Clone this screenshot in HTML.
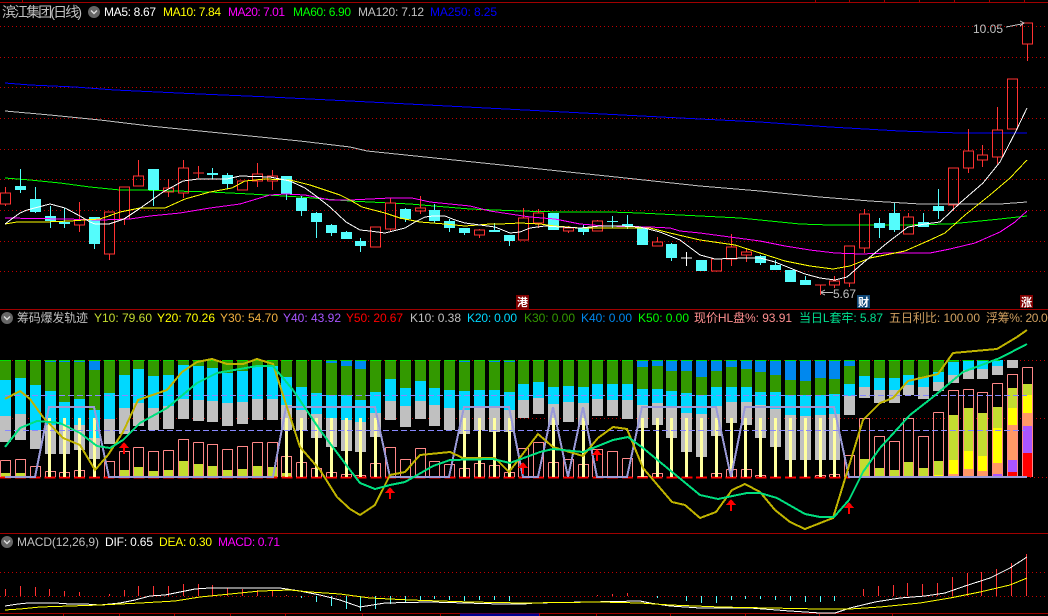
<!DOCTYPE html>
<html><head><meta charset="utf-8"><style>
html,body{margin:0;padding:0;background:#000;width:1048px;height:616px;overflow:hidden}
svg{display:block}
text{font-family:"Liberation Sans","Noto Sans CJK SC",sans-serif;font-size:12px}
.c{font-size:11px;fill:#fff;font-weight:bold;text-anchor:middle}
</style></head><body>
<svg width="1048" height="616" viewBox="0 0 1048 616">
<rect width="1048" height="616" fill="#000"/>
<g shape-rendering="crispEdges" fill="none">
<!-- frame -->
<path d="M0 2.5H1048M0 309.5H1048M0 533.5H1048M0 613.5H1048M22.5 0V2M815.5 0V2M849.5 0V2M884.5 0V2M919.5 0V2M954.5 0V2M989.5 0V2M1024.5 0V2M63.5 613V616M119.5 613V616M174.5 613V616M230.5 613V616M285.5 613V616M362.5 613V616M440.5 613V616M539.5 613V616M596.5 613V616M670.5 613V616M745.5 613V616M819.5 613V616M892.5 613V616" stroke="#a00000"/>
<path d="M460 615H539" stroke="#000090" stroke-width="3"/>
<!-- grid -->
<path d="M0 26.5H1048M0 57.5H1048M0 87.5H1048M0 118.5H1048M0 149.5H1048M0 179.5H1048M0 210.5H1048M0 241.5H1048M0 271.5H1048M0 360.5H1048M0 418.5H1048M0 572.5H1048M0 596.5H1048" stroke="#c00000" stroke-dasharray="1 3"/>

<!-- MA lines -->
<polyline stroke="#0000ff" points="5,83 30,85 75,87 115,90 200,94 270,97 350,101 700,119 760,122 830,127 900,131 960,133 1027,133"/>
<polyline stroke="#c0c0c0" points="5,111 50,115 100,120 150,126 200,131 250,136 300,141 350,147 367,151 483,163 616,177 700,186 760,191 820,197 870,201 920,204 1000,204 1027,202"/>
<polyline stroke="#00ff00" points="5,178 30,180 60,183 90,187 120,190 140,190 210,192 250,194 300,197 350,201 370,202 410,204 470,209 520,211 560,212 610,212 640,213 700,216 740,218 760,220 800,224 830,225 900,225 950,224 1000,219 1027,216"/>

<!-- candles: wicks/bodies -->
<path stroke="#54fcfc" d="M20.5 169V193M35.5 187V213M50.5 206V228M64.5 208V228M94.5 217V249M153.5 169V206M212.5 168V179M227.5 173V189M286.5 176V200M301.5 196V216M316.5 212V238M331.5 224V236M346.5 231V239M360.5 238V252M405.5 208V222M434.5 204V223M449.5 219V232M464.5 228V235M494.5 223V232M509.5 235V246M583.5 224V235M612.5 216V228M627.5 215V229M671.5 243V261M760.5 255V265M775.5 260V270M805.5 276V285M879.5 218V238M894.5 203V232M923.5 213V227M938.5 189V219"/>
<path fill="#54fcfc" d="M15 186h11v4h-11zM30 199h11v13h-11zM45 216h11v5h-11zM59 222h11v2h-11zM89 217h11v27h-11zM148 169h11v21h-11zM207 173h11v2h-11zM222 175h11v9h-11zM281 176h11v18h-11zM296 198h11v13h-11zM311 213h11v9h-11zM326 225h11v8h-11zM341 232h11v7h-11zM355 241h11v5h-11zM400 209h11v10h-11zM429 210h11v11h-11zM444 221h11v7h-11zM459 228h11v5h-11zM489 230h11v2h-11zM504 235h11v6h-11zM548 213h11v17h-11zM578 228h11v4h-11zM607 221h11v1h-11zM622 224h11v2h-11zM637 227h11v18h-11zM666 244h11v14h-11zM696 260h11v11h-11zM755 256h11v7h-11zM770 265h11v5h-11zM785 270h11v12h-11zM800 280h11v5h-11zM874 223h11v5h-11zM889 213h11v17h-11zM918 222h11v5h-11zM933 206h11v5h-11z"/>
<path stroke="#ff3232" d="M5.5 187V193M.5 193h10V204H.5zM5.5 204V206M79.5 202V220M74.5 220h10V225h-10zM79.5 225V232M104.5 212h10V254h-10zM109.5 254V260M119.5 187h10V219h-10zM124.5 219V225M138.5 160V176M133.5 176h10V186h-10zM168.5 179V188M163.5 188h10V192h-10zM168.5 192V197M183.5 160V168M178.5 168h10V193h-10zM183.5 193V198M198.5 166V178M193 173H204M237.5 181h10V190h-10zM257.5 163V174M252.5 174h10V181h-10zM257.5 181V187M272.5 170V176M267.5 176h10V181h-10zM272.5 181V190M370.5 227h10V247h-10zM390.5 198V203M385.5 203h10V229h-10zM390.5 229V231M420.5 196V208M415.5 208h10V211h-10zM420.5 211V214M479.5 229V230M474.5 230h10V235h-10zM479.5 235V238M523.5 208V218M518.5 218h10V240h-10zM538.5 209V213M533.5 213h10V223h-10zM538.5 223V228M568.5 226V228M563.5 228h10V231h-10zM568.5 231V233M597.5 220V221M592.5 221h10V231h-10zM652.5 242h10V246h-10zM657.5 237V242M711.5 259h10V271h-10zM731.5 234V247M726.5 247h10V259h-10zM731.5 259V266M746.5 248V252M741.5 252h10V255h-10zM746.5 255V262M820.5 285V295M815 285H826M834.5 276V281M829.5 281h10V285h-10zM834.5 285V288M844.5 246h10V283h-10zM849.5 283V287M864.5 209V214M859.5 214h10V248h-10zM864.5 248V253M908.5 213V217M903.5 217h10V234h-10zM948.5 168h10V205h-10zM953.5 205V211M968.5 129V151M963.5 151h10V168h-10zM968.5 168V173M982.5 145V155M977.5 155h10V160h-10zM982.5 160V167M997.5 107V130M992.5 130h10V157h-10zM997.5 157V164M1007.5 79h10V129h-10zM1022.5 23h10V44h-10zM1027.5 44V61"/>
<path stroke="#fff" d="M686.5 252V266M681 258H692"/>

<polyline stroke="#ff00ff" points="5,218 65,219 100,220 130,219 150,216 180,213 210,208 240,204 270,195 285,194 305,195 330,200 350,200 390,198 412,198 430,202 450,204 470,206 490,211 510,214 530,217 555,219 580,224 605,226 650,227 670,228 680,231 700,233 730,237 760,241 785,246 810,250 835,253 860,254 890,253 930,253 950,249 975,243 1000,232 1015,222 1027,211"/>
<polyline stroke="#ffff00" points="5,224 17,222 45,222 70,221 100,219 120,212 140,208 165,208 185,199 210,192 232,188 245,181 265,179 290,180 310,185 340,195 350,200 362,207 385,213 400,218 420,222 445,224 465,226 490,224 500,224 520,223 540,224 555,226 580,228 610,228 650,228 670,233 700,240 735,245 760,253 785,261 810,266 833,269 850,266 870,258 890,254 905,251 930,240 945,233 965,215 990,195 1010,178 1027,160"/>
<polyline stroke="#ffffff" points="5,224 13,218 20,213 27,210 50,204 65,208 80,216 90,222 95,224 109,224 124,219 139,209 163,192 183,181 198,179 227,179 240,176 270,177 290,181 305,188 316,196 330,207 346,222 360,230 370,231 385,233 405,228 415,222 425,217 433,216 445,216 455,220 465,223 480,225 495,227 510,233 520,232 530,228 545,226 560,227 580,228 600,226 620,226 640,227 660,232 680,240 700,255 715,259 745,258 760,258 775,262 790,268 805,274 820,278 835,280 847,277 863,263 887,243 908,227 925,224 940,222 960,203 983,183 1000,162 1015,133 1027,108"/>

<!-- arrows in price chart -->
<path stroke="#c0c0c0" d="M821 292.5H833M821 292L825 290M821 293L825 295M1006 27L1024 23.5M1020 21L1024 23L1020 26"/>

<!-- stacks -->
<g stroke-width="11">
<path stroke="#c0c0c0" d="M5.5 360V442M20.5 360V440M35.5 360V449M50.5 360V454M64.5 360V454M79.5 360V450M94.5 360V459M109.5 360V444M124.5 360V434M138.5 360V426M153.5 360V430M168.5 360V429M183.5 360V419M198.5 360V421M212.5 360V422M227.5 360V426M242.5 360V424M257.5 360V420M272.5 360V420M286.5 360V430M301.5 360V430M316.5 360V438M331.5 360V447M346.5 360V451M360.5 360V452M375.5 360V437M390.5 360V420M405.5 360V427M420.5 360V419M434.5 360V426M449.5 360V430M464.5 360V434M479.5 360V430M494.5 360V432M509.5 360V432M523.5 360V418M538.5 360V414M553.5 360V425M568.5 360V422M583.5 360V425M597.5 360V416M612.5 360V416M627.5 360V419M642.5 360V428M657.5 360V425M671.5 360V438M686.5 360V452M701.5 360V457M716.5 360V436M731.5 360V423M746.5 360V425M760.5 360V438M775.5 360V447M790.5 360V460M805.5 360V460M820.5 360V460M834.5 360V460M849.5 360V415M864.5 360V398M879.5 360V403M894.5 360V403M908.5 360V395M923.5 360V399M938.5 360V391M953.5 360V383M968.5 360V379M982.5 360V379M997.5 360V375M1012.5 360V368"/>
<path stroke="#00d8ff" d="M5.5 360V416M20.5 360V414M35.5 360V430M50.5 360V425M64.5 360V425M79.5 360V425M94.5 360V438M109.5 360V419M124.5 360V408M138.5 360V403M153.5 360V408M168.5 360V406M183.5 360V399M198.5 360V400M212.5 360V401M227.5 360V403M242.5 360V402M257.5 360V399M272.5 360V399M286.5 360V405M301.5 360V410M316.5 360V414M331.5 360V418M346.5 360V420M360.5 360V422M375.5 360V413M390.5 360V401M405.5 360V406M420.5 360V401M434.5 360V405M449.5 360V408M464.5 360V410M479.5 360V408M494.5 360V408M509.5 360V410M523.5 360V400M538.5 360V398M553.5 360V404M568.5 360V402M583.5 360V403M597.5 360V399M612.5 360V400M627.5 360V400M642.5 360V405M657.5 360V403M671.5 360V407M686.5 360V413M701.5 360V414M716.5 360V406M731.5 360V402M746.5 360V402M760.5 360V405M775.5 360V409M790.5 360V415M805.5 360V416M820.5 360V415M834.5 360V414M849.5 360V396M864.5 360V387M879.5 360V390M894.5 360V390M908.5 360V385M923.5 360V387M938.5 360V382M953.5 360V375M968.5 360V370M982.5 360V369M997.5 360V366"/>
<path stroke="#339900" d="M5.5 360V380M20.5 360V378M35.5 360V385M50.5 360V391M64.5 360V402M79.5 360V399M94.5 360V410M109.5 360V393M124.5 360V375M138.5 360V369M153.5 360V376M168.5 360V375M183.5 360V365M198.5 360V366M212.5 360V368M227.5 360V373M242.5 360V371M257.5 360V367M272.5 360V366M286.5 360V377M301.5 360V387M316.5 360V393M331.5 360V395M346.5 360V395M360.5 360V400M375.5 360V392M390.5 360V379M405.5 360V388M420.5 360V381M434.5 360V388M449.5 360V390M464.5 360V391M479.5 360V390M494.5 360V390M509.5 360V392M523.5 360V384M538.5 360V382M553.5 360V387M568.5 360V386M583.5 360V387M597.5 360V384M612.5 360V384M627.5 360V384M642.5 360V389M657.5 360V389M671.5 360V391M686.5 360V393M701.5 360V395M716.5 360V387M731.5 360V387M746.5 360V387M760.5 360V392M775.5 360V392M790.5 360V395M805.5 360V395M820.5 360V395M834.5 360V394M849.5 360V384M864.5 360V376M879.5 360V378M894.5 360V378M908.5 360V375M923.5 360V377M938.5 360V372M953.5 360V362"/>
<path stroke="#0088ee" d="M50.5 360V362M64.5 360V362M79.5 360V362M94.5 360V370M183.5 360V361M331.5 360V363M346.5 360V366M360.5 360V369M464.5 360V362M494.5 360V362M509.5 360V362M642.5 360V367M657.5 360V366M671.5 360V371M686.5 360V371M701.5 360V377M716.5 360V371M731.5 360V367M746.5 360V369M760.5 360V372M775.5 360V375M790.5 360V380M805.5 360V381M820.5 360V378M834.5 360V379M849.5 360V366"/>
<!-- fills -->
<path stroke="#c4dc30" d="M5.5 473V477M20.5 473V477M124.5 470V477M138.5 467V477M153.5 471V477M168.5 470V477M183.5 461V477M198.5 464V477M212.5 466V477M227.5 470V477M242.5 469V477M257.5 466V477M272.5 467V477M286.5 473V477M864.5 459V477M879.5 468V477M894.5 470V477M908.5 462V477M923.5 468V477M938.5 461V477M953.5 415V477M968.5 408V477M982.5 413V477M997.5 407V477M1012.5 388V477M1027.5 384V477"/>
<path stroke="#ffff00" d="M864.5 476V477M938.5 475V477M953.5 460V477M968.5 451V477M982.5 456V477M997.5 428V477M1012.5 408V477M1027.5 395V477"/>
<path stroke="#ff9966" d="M953.5 474V477M968.5 469V477M982.5 471V477M997.5 463V477M1012.5 425V477M1027.5 413V477"/>
<path stroke="#aa55ff" d="M997.5 474V477M1012.5 460V477M1027.5 426V477"/>
<path stroke="#ff0000" d="M1012.5 472V477M1027.5 453V477"/>
</g>
<path d="M0 360.5H1000" stroke="#00e000" stroke-dasharray="11 3.81"/>
<!-- red baseline -->
<path d="M0 477.5H850" stroke="#ff0000" stroke-width="2" stroke-dasharray="11 3.81"/>
<path d="M850 477.5H1048" stroke="#c00000" stroke-dasharray="1 3"/>
<!-- pink outlines -->
<path stroke="#ff8888" d="M.5 460.5h10V477M.5 460.5V477M15.5 459.5h10V477M15.5 459.5V477M30.5 466.5h10V477M30.5 466.5V477M45.5 471.5h10V477M45.5 471.5V477M59.5 472.5h10V477M59.5 472.5V477M74.5 470.5h10V477M74.5 470.5V477M104.5 461.5h10V477M104.5 461.5V477M119.5 451.5h10V477M119.5 451.5V477M133.5 447.5h10V477M133.5 447.5V477M148.5 451.5h10V477M148.5 451.5V477M163.5 450.5h10V477M163.5 450.5V477M178.5 439.5h10V477M178.5 439.5V477M193.5 442.5h10V477M193.5 442.5V477M207.5 444.5h10V477M207.5 444.5V477M222.5 449.5h10V477M222.5 449.5V477M237.5 446.5h10V477M237.5 446.5V477M252.5 442.5h10V477M252.5 442.5V477M267.5 442.5h10V477M267.5 442.5V477M281.5 456.5h10V477M281.5 456.5V477M296.5 462.5h10V477M296.5 462.5V477M311.5 468.5h10V477M311.5 468.5V477M326.5 472.5h10V477M326.5 472.5V477M341.5 474.5h10V477M341.5 474.5V477M355.5 475.5h10V477M355.5 475.5V477M370.5 463.5h10V477M370.5 463.5V477M385.5 447.5h10V477M385.5 447.5V477M400.5 459.5h10V477M400.5 459.5V477M415.5 448.5h10V477M415.5 448.5V477M429.5 461.5h10V477M429.5 461.5V477M444.5 464.5h10V477M444.5 464.5V477M459.5 468.5h10V477M459.5 468.5V477M474.5 463.5h10V477M474.5 463.5V477M489.5 465.5h10V477M489.5 465.5V477M504.5 472.5h10V477M504.5 472.5V477M518.5 448.5h10V477M518.5 448.5V477M533.5 442.5h10V477M533.5 442.5V477M548.5 462.5h10V477M548.5 462.5V477M563.5 459.5h10V477M563.5 459.5V477M578.5 464.5h10V477M578.5 464.5V477M592.5 449.5h10V477M592.5 449.5V477M607.5 451.5h10V477M607.5 451.5V477M622.5 458.5h10V477M622.5 458.5V477M637.5 476.5h10M652.5 473.5h10V477M652.5 473.5V477M711.5 473.5h10V477M711.5 473.5V477M726.5 469.5h10V477M726.5 469.5V477M741.5 469.5h10V477M741.5 469.5V477M755.5 475.5h10V477M755.5 475.5V477M815.5 475.5h10V477M815.5 475.5V477M829.5 474.5h10V477M829.5 474.5V477M844.5 455.5h10V477M844.5 455.5V477M859.5 418.5h10V477M859.5 418.5V477M874.5 436.5h10V477M874.5 436.5V477M889.5 441.5h10V477M889.5 441.5V477M903.5 418.5h10V477M903.5 418.5V477M918.5 436.5h10V477M918.5 436.5V477M933.5 412.5h10V477M933.5 412.5V477M948.5 390.5h10V477M948.5 390.5V477M963.5 389.5h10V477M963.5 389.5V477M977.5 392.5h10V477M977.5 392.5V477M992.5 383.5h10V477M992.5 383.5V477M1007.5 374.5h10V477M1007.5 374.5V477M1022.5 367.5h10V477M1022.5 367.5V477"/>
<!-- pale yellow bars -->
<path stroke="#ffffa0" stroke-width="3" d="M49.5 418V477M64.5 418V477M79.5 418V477M94.5 418V477M286.5 418V477M301.5 418V477M316.5 418V477M331.5 418V477M346.5 418V477M360.5 418V477M375.5 418V477M464.5 418V477M479.5 418V477M494.5 418V477M509.5 418V477M553.5 418V477M583.5 418V477M642.5 418V477M657.5 418V477M671.5 418V477M686.5 418V477M701.5 418V477M716.5 418V477M731.5 418V477M745.5 418V477M760.5 418V477M775.5 418V477M790.5 418V477M805.5 418V477M820.5 418V477M834.5 418V477"/>
<!-- dashed -->
<path stroke="#8888ff" stroke-dasharray="6 3" d="M5 395.5H1027M5 430.5H1025"/>
<polyline stroke="#9a9ad8" stroke-width="2" points="5,477 35,477 49,407 94,407 109,477 273,477 286,407 375,407 390,477 449,477 464,407 509,407 523,477 538,477 553,407 568,477 583,407 597,477 627,477 642,407 716,407 731,477 745,407 834,407 849,477 1027,477"/>
</g>
<g fill="none" shape-rendering="crispEdges">
<polyline stroke="#c0b400" stroke-width="2" points="5,399 20,391 30,399 43,417 63,438 80,445 95,470 108,455 123,432 138,400 167,390 182,372 197,362 212,359 227,364 243,364 257,359 273,364 283,395 300,447 320,470 337,497 350,509 360,515 375,505 390,475 405,472 420,455 450,452 463,458 485,458 495,458 509,472 538,434 553,447 583,456 598,438 613,427 627,429 643,468 672,502 685,505 700,518 716,512 732,490 745,484 760,492 775,510 790,522 805,529 833,518 863,420 880,403 893,398 908,381 938,374 953,353 997,349 1017,337 1027,330"/>
<polyline stroke="#00e080" stroke-width="2" points="5,447 20,428 37,421 60,423 80,433 97,446 110,448 123,440 140,423 167,408 197,383 217,373 240,369 257,366 273,366 293,390 320,430 350,470 360,483 375,489 390,485 405,482 433,466 450,460 493,459 510,463 540,452 553,449 583,452 613,440 628,437 643,448 700,495 718,499 747,493 760,493 777,498 805,514 820,517 834,517 849,500 863,472 880,448 910,415 933,397 963,372 1000,358 1027,344"/>
<!-- red up arrows -->
<path fill="#ff0000" d="M124 442l5 6h-4v6h-2v-6h-4zM390 487l5 6h-4v6h-2v-6h-4zM523 462l5 6h-4v6h-2v-6h-4zM597 449l5 6h-4v6h-2v-6h-4zM731 499l5 6h-4v6h-2v-6h-4zM849 502l5 6h-4v6h-2v-6h-4z"/>
<!-- MACD histogram -->
<path stroke="#ff3232" d="M5.5 589V596M20.5 586V596M35.5 587V596M49.5 589V596M64.5 591V596M79.5 592V596M109.5 594V596M124.5 590V596M138.5 586V596M153.5 586V596M168.5 586V596M183.5 584V596M198.5 584V596M212.5 585V596M227.5 588V596M242.5 589V596M257.5 590V596M272.5 591V596M286.5 595V596M597.5 595V596M612.5 594V596M627.5 593V596M863.5 589V596M878.5 586V596M893.5 585V596M907.5 583V596M922.5 584V596M937.5 583V596M952.5 577V596M967.5 573V596M981.5 572V596M996.5 569V596M1011.5 563V596M1026.5 554V596"/>
<path stroke="#54fcfc" d="M301.5 596V598M316.5 596V602M331.5 596V606M346.5 596V609M360.5 596V611M375.5 596V609M390.5 596V604M405.5 596V602M420.5 596V600M434.5 596V599M449.5 596V600M464.5 596V601M479.5 596V600M494.5 596V600M509.5 596V601M657.5 596V598M686.5 596V601M701.5 596V603M716.5 596V603M731.5 596V600M745.5 596V599M760.5 596V599M775.5 596V600M790.5 596V601M805.5 596V602M820.5 596V602M834.5 596V601"/>
<polyline stroke="#ffffff" points="5,606 18,604 28,603 55,603 70,604 85,604 100,605 120,603 135,600 150,596 165,595 195,589 210,588 280,588 300,591 320,595 340,600 360,607 385,603 430,602 500,604 524,604 535,603 640,601 650,603 670,606 700,608 750,608 790,611 820,613 835,613 850,608 875,602 900,598 925,596 945,593 965,586 990,578 1010,568 1027,557"/>
<polyline stroke="#ffff00" points="5,610 20,609 40,607 70,606 100,605 140,603 175,601 200,597 230,594 260,591 290,590 310,592 340,594 370,598 410,600 470,602 524,603 600,602 640,603 670,605 720,607 770,608 820,609 850,609 880,607 920,603 950,598 980,592 1010,585 1027,578"/>
</g>

<!-- header 1 -->
<text x="2" y="17" style="font-size:14px" fill="#c0c0c0" textLength="80">滨江集团(日线)</text>
<circle cx="94" cy="12" r="6" fill="#666"/><path d="M91 10.5l3 3 3-3" fill="none" stroke="#ddd" stroke-width="1.4"/>
<text x="104" y="16" fill="#fff" textLength="52">MA5: 8.67</text>
<text x="163" y="16" fill="#ffff00" textLength="58">MA10: 7.84</text>
<text x="228" y="16" fill="#ff00ff" textLength="57">MA20: 7.01</text>
<text x="293" y="16" fill="#00ff00" textLength="58">MA60: 6.90</text>
<text x="358" y="16" fill="#c0c0c0" textLength="66">MA120: 7.12</text>
<text x="430" y="16" fill="#0000ff" textLength="67">MA250: 8.25</text>
<text x="973" y="33" fill="#c0c0c0" textLength="30">10.05</text>
<text x="833" y="298" fill="#c0c0c0" textLength="23">5.67</text>

<!-- markers -->
<rect x="516" y="295" width="13" height="14" fill="#800000"/><text class="c" x="522.5" y="306">港</text>
<rect x="857" y="295" width="13" height="13" fill="#104878"/><text class="c" x="863.5" y="306">财</text>
<rect x="1020" y="295" width="13" height="13" fill="#800000"/><text class="c" x="1026.5" y="306">涨</text>

<!-- header 2 -->
<circle cx="7" cy="318" r="6" fill="#666"/><path d="M4 316.5l3 3 3-3" fill="none" stroke="#ddd" stroke-width="1.4"/>
<text x="17" y="322" fill="#c0c0c0" textLength="71">筹码爆发轨迹</text>
<text x="94" y="322" fill="#c4dc30" textLength="58">Y10: 79.60</text>
<text x="157" y="322" fill="#ffff00" textLength="58">Y20: 70.26</text>
<text x="220" y="322" fill="#f0b040" textLength="58">Y30: 54.70</text>
<text x="283" y="322" fill="#a855ff" textLength="58">Y40: 43.92</text>
<text x="346" y="322" fill="#ff0000" textLength="57">Y50: 20.67</text>
<text x="410" y="322" fill="#c0c0c0" textLength="51">K10: 0.38</text>
<text x="467" y="322" fill="#00d8ff" textLength="50">K20: 0.00</text>
<text x="524" y="322" fill="#339900" textLength="51">K30: 0.00</text>
<text x="581" y="322" fill="#0088ee" textLength="51">K40: 0.00</text>
<text x="638" y="322" fill="#00ff00" textLength="51">K50: 0.00</text>
<text x="694" y="322" fill="#ff9090" textLength="98">现价HL盘%: 93.91</text>
<text x="799" y="322" fill="#00e090" textLength="84">当日L套牢: 5.87</text>
<text x="889" y="322" fill="#d0a060" textLength="91">五日利比: 100.00</text>
<text x="986" y="322" fill="#d0a060" textLength="68">浮筹%: 20.00</text>

<!-- header 3 -->
<circle cx="7" cy="542" r="6" fill="#666"/><path d="M4 540.5l3 3 3-3" fill="none" stroke="#ddd" stroke-width="1.4"/>
<text x="17" y="546" fill="#c0c0c0" textLength="82">MACD(12,26,9)</text>
<text x="105" y="546" fill="#fff" textLength="48">DIF: 0.65</text>
<text x="159" y="546" fill="#ffff00" textLength="53">DEA: 0.30</text>
<text x="218" y="546" fill="#ff00ff" textLength="62">MACD: 0.71</text>
</svg>
</body></html>
